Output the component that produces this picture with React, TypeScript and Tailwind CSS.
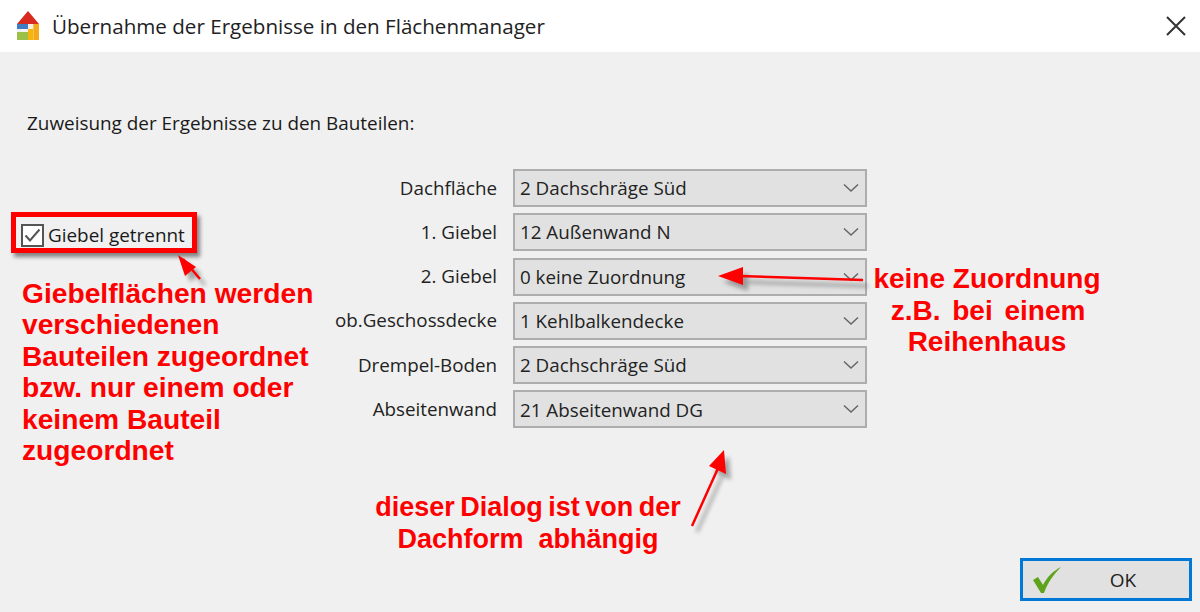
const rows = [
  ["Dachfläche", "2 Dachschräge Süd"],
  ["1. Giebel", "12 Außenwand N"],
  ["2. Giebel", "0 keine Zuordnung"],
  ["ob.Geschossdecke", "1 Kehlbalkendecke"],
  ["Drempel-Boden", "2 Dachschräge Süd"],
  ["Abseitenwand", "21 Abseitenwand DG"],
];

const ui = { fontFamily: '"Open Sans", "Noto Sans", sans-serif' };
const note = { fontFamily: '"Liberation Sans", Arial, sans-serif' };

function Logo() {
  return (
    <svg width="24" height="30" viewBox="0 0 24 30" className="block">
      <path d="M12 0 L23 13 L1 13 Z" fill="#d92a20" />
      <rect x="1" y="13" width="11" height="5" fill="#3f7cc4" />
      <rect x="1" y="18" width="5" height="3" fill="#eef2f5" />
      <rect x="6.5" y="18" width="5.5" height="3" fill="#f4f4f4" />
      <rect x="1" y="21" width="11" height="8" fill="#9cc048" />
      <rect x="12" y="13" width="5" height="5" fill="#f5f0e0" />
      <rect x="17" y="13" width="6" height="5" fill="#e9d9a8" />
      <rect x="12" y="18" width="5.5" height="11" fill="#f6b40e" />
      <rect x="17.5" y="13" width="5.5" height="16" fill="#f4a81c" />
    </svg>
  );
}

function Arrow({ x, y, w, h, d, head }: { x: number; y: number; w: number; h: number; d: string; head: string }) {
  return (
    <svg
      width={w}
      height={h}
      viewBox={`0 0 ${w} ${h}`}
      className="absolute overflow-visible"
      style={{ left: x, top: y }}
    >
      <g opacity="0.4" transform="translate(5 6)" className="blur-[2px]" fill="#333" stroke="#333">
        <path d={d} fill="none" strokeWidth="3" />
        <path d={head} stroke="none" />
      </g>
      <path d={d} fill="none" stroke="#ff0000" strokeWidth="2.5" />
      <path d={head} fill="#ff0000" />
    </svg>
  );
}

export default function App() {
  return (
    <div className="relative flex h-[612px] w-[1200px] flex-col overflow-hidden bg-[#f0f0f0] text-[#1a1a1a]" style={ui}>
      <header className="flex h-[52px] items-center bg-white pl-[16px] pr-[13px]">
        <Logo />
        <span className="ml-[12px] text-[20.6px] leading-none text-[#222]">Übernahme der Ergebnisse in den Flächenmanager</span>
        <svg width="22" height="22" viewBox="0 0 22 22" className="ml-auto" fill="none" stroke="#333" strokeWidth="2">
          <path d="M2 2 L20 20 M20 2 L2 20" />
        </svg>
      </header>

      <main className="flex flex-1 flex-col pl-[27px]">
        <p className="mt-[59px] text-[18.9px] leading-[24px]">Zuweisung der Ergebnisse zu den Bauteilen:</p>

        <div className="mt-[34px] flex w-[840px] flex-col gap-[6.3px]">
          {rows.map(([label, value]) => (
            <div key={label} className="flex items-center justify-end gap-[16px]">
              <span className="text-[18.8px] leading-none text-[#222]">{label}</span>
              <div className="flex h-[38px] w-[354px] items-center justify-between border-2 border-[#adadad] bg-[#e1e1e1] pl-[5px] pr-[5px] text-[18.8px] leading-none text-[#222]">
                <span className="pt-[1px]">{value}</span>
                <svg width="18" height="12" viewBox="0 0 18 12" fill="none" stroke="#666" strokeWidth="1.5">
                  <path d="M2 2.5 L9 9 L16 2.5" />
                </svg>
              </div>
            </div>
          ))}
        </div>
      </main>

      <footer className="flex justify-end pb-[11px] pr-[8px]">
        <button className="relative flex h-[43px] w-[172px] items-center justify-center border-[3px] border-[#0078d7] bg-[#e1e1e1] text-[19px] text-[#222]">
          <svg width="30" height="30" viewBox="0 0 30 30" className="absolute left-[9px] top-[4px]">
            <path d="M1 15 L6 12 L11 20 C15 12 21 6 29 2 C22 9 16 17 12 28 L9 28 Z" fill="#5fa31c" />
          </svg>
          <span className="pl-[34px] pt-[2px]">OK</span>
        </button>
      </footer>

      <div className="absolute left-[11px] top-[212px] flex h-[41px] w-[186px] items-center border-[5px] border-[#ff0000] pl-[5px] pt-[5px] shadow-[3px_4px_4px_rgba(0,0,0,0.45)]">
        <span className="flex h-[23px] w-[23px] items-center justify-center border-2 border-[#555] bg-white">
          <svg width="17" height="15" viewBox="0 0 17 15" fill="none" stroke="#555" strokeWidth="2">
            <path d="M1.5 7.5 L6 12.5 L15.5 1.5" />
          </svg>
        </span>
        <span className="ml-[4px] whitespace-nowrap text-[18.9px] leading-none">Giebel getrennt</span>
      </div>

      <Arrow x={175} y={255} w={30} h={30} d="M8 4 L25 24" head="M3 0 L21 12 L10 21 Z" />
      <Arrow x={718} y={265} w={146} h={24} d="M20 11 L145 15" head="M0 11 L25 2 L25 20 Z" />
      <Arrow x={690} y={450} w={40} h={80} d="M2 76 L29 16" head="M34 0 L36 24 L19 16 Z" />

      <div className="absolute left-[22px] top-[278px] text-[28.2px] font-bold leading-[31.4px] text-[#ff0000]" style={note}>
        <div className="whitespace-nowrap">Giebelflächen werden</div>
        <div className="whitespace-nowrap">verschiedenen</div>
        <div className="whitespace-nowrap">Bauteilen zugeordnet</div>
        <div className="whitespace-nowrap">bzw. nur einem oder</div>
        <div className="whitespace-nowrap">keinem Bauteil</div>
        <div className="whitespace-nowrap">zugeordnet</div>
      </div>

      <div className="absolute left-[873px] top-[263px] w-[228px] text-center text-[28px] font-bold leading-[31.5px] text-[#ff0000]" style={note}>
        <div className="whitespace-nowrap">keine Zuordnung</div>
        <div className="whitespace-nowrap pl-[2px] [word-spacing:4px]">z.B. bei einem</div>
        <div className="whitespace-nowrap">Reihenhaus</div>
      </div>

      <div className="absolute left-[372px] top-[491px] w-[312px] text-center text-[27px] font-bold leading-[32px] text-[#ff0000]" style={note}>
        <div className="whitespace-nowrap [word-spacing:-2px]">dieser Dialog ist von der</div>
        <div className="whitespace-pre">Dachform  abhängig</div>
      </div>
    </div>
  );
}
